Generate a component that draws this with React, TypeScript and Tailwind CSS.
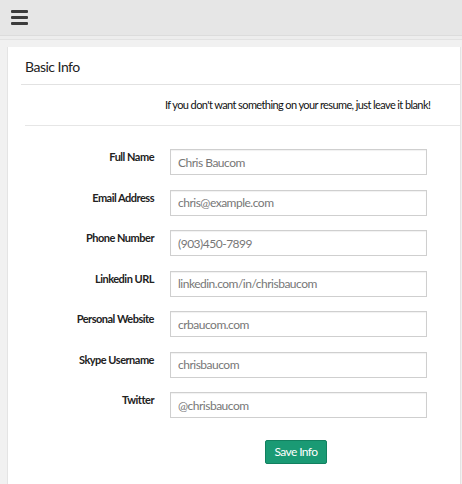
const fields = [
  { label: 'Full Name', value: 'Chris Baucom' },
  { label: 'Email Address', value: 'chris@example.com' },
  { label: 'Phone Number', value: '(903)450-7899' },
  { label: 'Linkedin URL', value: 'linkedin.com/in/chrisbaucom' },
  { label: 'Personal Website', value: 'crbaucom.com' },
  { label: 'Skype Username', value: 'chrisbaucom' },
  { label: 'Twitter', value: '@chrisbaucom' },
];

const App = () => {
  return (
    <div className="h-[484px] w-full overflow-hidden bg-[#f1f1f1] font-['Lato',sans-serif] text-[#222]">
      <header className="flex h-[36px] items-center border-b border-[#dcdcdc] bg-[#e6e6e6] pl-[11px]">
        <div className="flex w-[17px] flex-col gap-[3px]">
          <span className="h-[3px] rounded-[1px] bg-[#3b3b3b]" />
          <span className="h-[3px] rounded-[1px] bg-[#3b3b3b]" />
          <span className="h-[3px] rounded-[1px] bg-[#3b3b3b]" />
        </div>
      </header>
      <div className="h-[4px] border-b border-[#e2e2e2] bg-[#ededed]" />
      <div className="ml-[7px] mr-[1px] mt-[7px] h-[441px] border-l border-r border-b border-[#e4e4e4] bg-white">
        <div className="ml-[13px] flex h-[38px] items-center border-b border-[#e2e2e2] pl-[4px] pt-[2px]">
          <h2 className="text-[14px] tracking-[-0.5px] text-[#222]">Basic Info</h2>
        </div>
        <div className="ml-[17px] flex h-[41px] items-center border-b border-[#e6e6e6] pl-[140px]">
          <p className="whitespace-nowrap text-[11px] tracking-[-0.6px] text-[#111]">
            If you don't want something on your resume, just leave it blank!
          </p>
        </div>
        <form className="mt-[23px] flex flex-col gap-[14.5px]">
          {fields.map((f) => (
            <div key={f.label} className="flex items-start">
              <label className="w-[146px] pt-[1px] text-right text-[11px] font-bold leading-[13px] tracking-[-0.5px] text-[#222]">
                {f.label}
              </label>
              <input
                readOnly
                value={f.value}
                className="ml-[16px] h-[26px] w-[257px] border border-[#cfcfcf] px-[7px] text-[12px] tracking-[-0.5px] text-[#777] shadow-[inset_0_1px_1px_rgba(0,0,0,0.06)] outline-none"
              />
            </div>
          ))}
          <div className="mt-[7px] flex pl-[257px]">
            <button
              type="button"
              className="h-[24px] w-[62px] rounded-[2px] border border-[#12805f] bg-[#1a9a74] text-[12px] tracking-[-0.6px] text-white"
            >
              Save Info
            </button>
          </div>
        </form>
      </div>
    </div>
  );
};

export default App;
